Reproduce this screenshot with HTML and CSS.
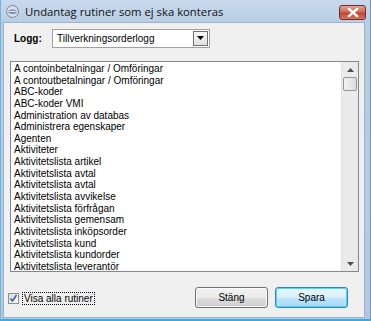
FILE: index.html
```html
<!DOCTYPE html>
<html lang="sv">
	<head>
		<meta charset="UTF-8" />
		<title>Undantag rutiner som ej ska konteras</title>
		<link rel="stylesheet" href="styles.css">
	</head>
	<body>
		<div class="window">
			<div class="titlebar">
				<svg class="appIcon" width="13" height="13" viewBox="0 0 13 13">
					<circle cx="6.5" cy="6.5" r="6" fill="#d8dde6" stroke="#7d8796" stroke-width="1" />
					<ellipse cx="6.5" cy="6.8" rx="4" ry="2.2" fill="#6f8fc0" />
					<path d="M3 6.5 L10 6.5" stroke="#fff" stroke-width="0.8" />
				</svg>
				<span class="title">Undantag rutiner som ej ska konteras</span>
				<div class="closeBtn">
					<svg width="12" height="9" viewBox="0 0 12 9">
						<path d="M2 1 L10 8 M10 1 L2 8" stroke="#fff" stroke-width="2.4" stroke-linecap="square" />
					</svg>
				</div>
			</div>
			<div class="client">
				<div class="loggRow">
					<label class="loggLabel" for="logg">Logg:</label>
					<div class="combo" id="logg">
						<span class="comboText">Tillverkningsorderlogg</span>
						<span class="comboBtn">
							<svg width="7" height="4" viewBox="0 0 7 4"><path d="M0 0 L7 0 L3.5 4 Z" fill="#000" /></svg>
						</span>
					</div>
				</div>
				<div class="listbox">
					<ul class="items">
						<li>A contoinbetalningar / Omföringar</li>
						<li>A contoutbetalningar / Omföringar</li>
						<li>ABC-koder</li>
						<li>ABC-koder VMI</li>
						<li>Administration av databas</li>
						<li>Administrera egenskaper</li>
						<li>Agenten</li>
						<li>Aktiviteter</li>
						<li>Aktivitetslista artikel</li>
						<li>Aktivitetslista avtal</li>
						<li>Aktivitetslista avtal</li>
						<li>Aktivitetslista avvikelse</li>
						<li>Aktivitetslista förfrågan</li>
						<li>Aktivitetslista gemensam</li>
						<li>Aktivitetslista inköpsorder</li>
						<li>Aktivitetslista kund</li>
						<li>Aktivitetslista kundorder</li>
						<li>Aktivitetslista leverantör</li>
					</ul>
					<div class="scrollbar">
						<svg class="arrow" width="7" height="4" viewBox="0 0 7 4"><path d="M3.5 0 L7 4 L0 4 Z" fill="#4d4d4d" /></svg>
						<div class="thumb"></div>
						<div class="track"></div>
						<svg class="arrow" width="7" height="4" viewBox="0 0 7 4"><path d="M0 0 L7 0 L3.5 4 Z" fill="#4d4d4d" /></svg>
					</div>
				</div>
				<div class="bottomRow">
					<label class="check">
						<span class="box">
							<svg width="9" height="9" viewBox="0 0 9 9"><path d="M1.5 4.5 L3.5 7 L7.5 1" stroke="#3a5ea8" stroke-width="1.6" fill="none" /></svg>
						</span>
						<span class="checkText">Visa alla rutiner</span>
					</label>
					<button class="btn">Stäng</button>
					<button class="btn default">Spara</button>
				</div>
			</div>
		</div>
	</body>
</html>
```

FILE: styles.css
```css
html,
body {
	margin: 0;
	padding: 0;
}

body {
	width: 371px;
	height: 321px;
	overflow: hidden;
	font-family: "Liberation Sans", Arial, sans-serif;
	font-size: 10px;
	color: #000;
}

.window {
	box-sizing: border-box;
	width: 371px;
	height: 321px;
	display: flex;
	flex-direction: column;
	padding: 0 5px 1px 2px;
	background: linear-gradient(#c9d9ec, #b9cde4 22px, #b2c8e2);
	border-bottom: 2px solid #3fa8dc;
	border-left: 1px solid #6cb6e0;
	border-right: 1px solid #7596ba;
}

.titlebar {
	height: 22px;
	display: flex;
	align-items: center;
	flex-shrink: 0;
}

.appIcon {
	margin-left: 3px;
	margin-right: 6px;
}

.title {
	font-family: "Open Sans", "Noto Sans", sans-serif;
	font-size: 11.3px;
	color: #111;
}

.closeBtn {
	margin-left: auto;
	margin-right: -1px;
	margin-top: 2px;
	width: 27px;
	height: 15px;
	box-sizing: border-box;
	border: 1px solid #6b2f2f;
	border-radius: 3px;
	background: linear-gradient(#e6a493, #d06a59 45%, #c04432 55%, #d5775e);
	display: flex;
	align-items: center;
	justify-content: center;
}

.client {
	flex: 1;
	background: #f0f0f0;
	border: 1px solid #9fb2c8;
	display: flex;
	flex-direction: column;
}

.loggRow {
	display: flex;
	align-items: center;
	margin: 5px 0 0 10px;
	height: 20px;
}

.loggLabel {
	font-weight: bold;
	width: 38px;
}

.combo {
	box-sizing: border-box;
	width: 158px;
	height: 19px;
	display: flex;
	align-items: center;
	background: #fff;
	border: 1px solid #a0a0a0;
	padding: 1px;
}

.comboText {
	flex: 1;
	padding-left: 3px;
}

.comboBtn {
	box-sizing: border-box;
	width: 15px;
	height: 15px;
	border: 1px solid #707070;
	background: linear-gradient(#f6f6f6, #e2e2e2);
	display: flex;
	align-items: center;
	justify-content: center;
}

.listbox {
	box-sizing: border-box;
	margin: 13px 0 0 6px;
	width: 349px;
	height: 211px;
	background: #fff;
	border: 1px solid #828790;
	display: flex;
}

.items {
	list-style: none;
	margin: 0;
	padding: 1px 0 0 3px;
	flex: 1;
	overflow: hidden;
}

.items li {
	height: 11.65px;
	line-height: 11.65px;
	white-space: nowrap;
}

.scrollbar {
	width: 16px;
	background: #eaeaea;
	border-left: 1px solid #e0e0e0;
	display: flex;
	flex-direction: column;
	align-items: center;
}

.arrow {
	margin: 6px 0 5px;
	flex-shrink: 0;
}

.thumb {
	box-sizing: border-box;
	width: 14px;
	height: 14px;
	border: 1px solid #979797;
	border-radius: 2px;
	background: linear-gradient(90deg, #f2f2f2, #dcdcdc);
}

.track {
	flex: 1;
}

.bottomRow {
	display: flex;
	align-items: center;
	margin: 15px 0 0 4px;
	height: 21px;
}

.check {
	display: flex;
	align-items: center;
	margin-right: auto;
	margin-top: 2px;
}

.box {
	box-sizing: border-box;
	width: 11px;
	height: 11px;
	border: 1px solid #8e8f8f;
	background: linear-gradient(135deg, #dcdcdc, #fbfbfb);
	display: flex;
	align-items: center;
	justify-content: center;
}

.checkText {
	margin-left: 3px;
	padding: 0 1px;
	border: 1px dotted #000;
	line-height: 11px;
}

.btn {
	box-sizing: border-box;
	width: 73px;
	height: 21px;
	margin-left: 7px;
	font-family: "Liberation Sans", Arial, sans-serif;
	font-size: 10px;
	color: #000;
	border: 1px solid #707070;
	border-radius: 3px;
	background: linear-gradient(#f2f2f2, #ebebeb 50%, #dddddd 50%, #cfcfcf);
	box-shadow: inset 0 0 0 1px #fcfcfc;
	padding: 0;
}

.btn.default {
	margin-right: 16px;
	border-color: #3c7fb1;
	background: linear-gradient(#eaf6fd, #d9f0fc 50%, #bee6fd 50%, #a7d9f5);
	box-shadow: inset 0 0 0 1px #48d8fb;
}
```
